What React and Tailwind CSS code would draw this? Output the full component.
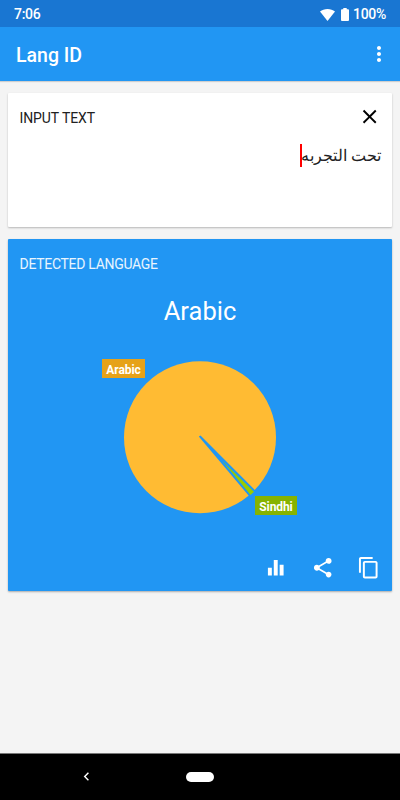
import { MdChevronLeft, MdClose, MdContentCopy, MdEqualizer, MdMoreVert, MdShare } from "react-icons/md";

const ACTIONS = [
  { id: "stats", label: "Statistics", icon: MdEqualizer },
  { id: "share", label: "Share", icon: MdShare },
  { id: "copy", label: "Copy", icon: MdContentCopy },
];

function StatusBar() {
  return (
    <div className="flex h-[27px] items-center justify-between bg-[#1976d2] pl-[14px] pr-[14px] pt-[2px] text-[14px] font-medium tracking-[-0.300px] text-white">
      <span>7:06</span>
      <div className="flex items-center">
        <svg className="mr-[6px] h-[12px] w-[15px]" viewBox="0 0 15 12" fill="currentColor">
          <path d="M7.5 12 0 2.6C2 .9 4.6 0 7.5 0S13 .9 15 2.6z" />
        </svg>
        <svg className="mr-[4px] h-[13px] w-[8px]" viewBox="0 0 8 13" fill="currentColor">
          <path d="M2.3 0h3.400v1.200H7a1 1 0 0 1 1 1V12a1 1 0 0 1-1 1H1a1 1 0 0 1-1-1V2.200a1 1 0 0 1 1-1h1.300z" />
        </svg>
        <span>100%</span>
      </div>
    </div>
  );
}

function LanguageChart() {
  return (
    <div className="relative mx-auto h-[154px] w-[154px]">
      <svg className="block" width="154" height="154" viewBox="0 0 154 154">
        <circle cx="77" cy="77.300" r="76" fill="#ffbb33" />
        {/* Sindhi slice, separated by gaps in the card colour */}
        <path d="M75.800 76.500 77.500 75.600 132.400 130.500 134 137 126.800 137z" fill="#2196f3" />
        <path d="M99 100.500 131 131.800 127.600 135z" fill="#99cc00" />
      </svg>
      <span className="absolute -left-[21px] -top-px flex h-[19px] w-[43px] items-center justify-center bg-[#e6a219] pt-[3px] text-[12px] font-bold tracking-[-0.100px] text-white">
        Arabic
      </span>
      <span className="absolute left-[132px] top-[136px] flex h-[19px] w-[42px] items-center justify-center bg-[#86b300] pt-[3px] text-[12px] font-bold tracking-[-0.100px] text-white">
        Sindhi
      </span>
    </div>
  );
}

export default function App() {
  return (
    <div className="flex h-[800px] w-[400px] flex-col overflow-hidden bg-[#f4f4f4] font-['Roboto','Noto_Sans',sans-serif]">
      <StatusBar />

      <header className="flex h-[54px] items-center justify-between bg-[#2196f3] pl-[16px] pr-[9.500px] text-white shadow-[0_1px_1px_rgba(0,0,0,0.15)]">
        <h1 className="pt-[3px] text-[19.500px] font-medium">Lang ID</h1>
        <button type="button" aria-label="More">
          <MdMoreVert size={24} />
        </button>
      </header>

      <main className="flex flex-1 flex-col gap-3 px-2 pt-3">
        <section className="h-[134px] rounded-[1px] bg-white pl-[11.500px] pr-[11px] pt-[12px] text-black shadow-[0_1px_2px_rgba(0,0,0,0.25)]">
          <div className="flex h-6 items-center justify-between">
            <h2 className="pt-[3px] text-[14px] tracking-[-0.100px] text-[#212121]">INPUT TEXT</h2>
            <button type="button" aria-label="Clear">
              <MdClose size={23.3} />
            </button>
          </div>
          <div dir="rtl" className="mt-[15px] flex h-[23px] items-center">
            <p className="whitespace-nowrap pt-px text-[15.500px] leading-[23px] text-[#212121]">تحت التجربه</p>
            <span className="-mr-px h-[23px] w-[2px] bg-[#ff0000]" />
          </div>
        </section>

        <section className="flex h-[351.500px] flex-col rounded-[1px] bg-[#2196f3] px-[11.500px] text-white shadow-[0_1px_2px_rgba(0,0,0,0.3)]">
          <h2 className="pt-[15px] text-[14px] leading-5 tracking-[-0.300px] text-white/90">DETECTED LANGUAGE</h2>
          <p className="mt-[21px] text-center text-[25.500px] leading-8">Arabic</p>
          <div className="mt-[33px]">
            <LanguageChart />
          </div>
          <div className="mt-[42px] flex justify-end gap-[23px]">
            {ACTIONS.map(({ id, label, icon: Icon }) => (
              <button key={id} type="button" aria-label={label}>
                <Icon size={23.5} />
              </button>
            ))}
          </div>
        </section>
      </main>

      <nav className="relative flex h-[47px] items-center justify-center border-t border-[#777777] bg-black text-white">
        <button type="button" aria-label="Back" className="absolute left-[78px] top-[14px]">
          <MdChevronLeft size={17} />
        </button>
        <span className="h-[10px] w-[28px] rounded-full bg-white" />
      </nav>
    </div>
  );
}
